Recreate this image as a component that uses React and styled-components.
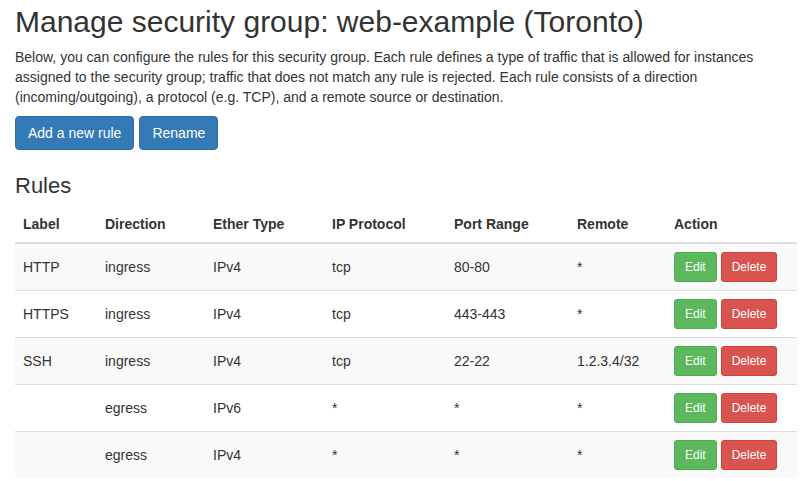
import styled, { createGlobalStyle } from "styled-components";

const GlobalStyle = createGlobalStyle`
  *, *::before, *::after {
    box-sizing: border-box;
  }
  body {
    margin: 0;
    font-family: "Liberation Sans", Arial, Helvetica, sans-serif;
    font-size: 14px;
    line-height: 1.42857;
    color: #333;
    background: #fff;
  }
`

const Page = styled.div`
  padding: 0 4px 0 15px;
`

const Title = styled.h1`
  font-size: 30px;
  font-weight: 400;
  line-height: 1.1;
  margin: 5px 0 10px;
`

const Intro = styled.p`
  margin: 0 0 8px;
`

const Toolbar = styled.div`
  display: flex;
  gap: 5px;
`

const colors = {
  primary: { bg: "#337ab7", border: "#2e6da4" },
  success: { bg: "#5cb85c", border: "#4cae4c" },
  danger: { bg: "#d9534f", border: "#d43f3a" },
}

const Button = styled.button`
  display: inline-block;
  font-family: inherit;
  font-size: ${(p) => (p.$small ? "12px" : "14px")};
  line-height: ${(p) => (p.$small ? "18px" : "20px")};
  padding: ${(p) => (p.$small ? "5px 10px" : "6px 12px")};
  border-radius: ${(p) => (p.$small ? "3px" : "4px")};
  border: 1px solid ${(p) => colors[p.$variant].border};
  background-color: ${(p) => colors[p.$variant].bg};
  color: #fff;
  cursor: pointer;
  white-space: nowrap;
`

const SectionTitle = styled.h2`
  font-size: 22px;
  font-weight: 400;
  line-height: 1.1;
  margin: 24px 0 8px;
`

const Table = styled.table`
  width: 100%;
  table-layout: fixed;
  border-collapse: collapse;
  border-spacing: 0;
`

const Th = styled.th`
  width: ${(p) => p.$w}px;
  text-align: left;
  vertical-align: bottom;
  padding: 8px;
  line-height: 20px;
  font-weight: 700;
  border-bottom: 2px solid #ddd;
`

const Row = styled.tr`
  &:nth-child(odd) {
    background-color: #f9f9f9;
  }
`

const Td = styled.td`
  padding: 8px;
  line-height: 20px;
  vertical-align: middle;
  border-top: 1px solid #ddd;
`

const Actions = styled.div`
  display: flex;
  gap: 4px;
`

const columns = [
  ["Label", 82],
  ["Direction", 108],
  ["Ether Type", 119],
  ["IP Protocol", 122],
  ["Port Range", 123],
  ["Remote", 97],
  ["Action", 131],
]

const rules = [
  ["HTTP", "ingress", "IPv4", "tcp", "80-80", "*"],
  ["HTTPS", "ingress", "IPv4", "tcp", "443-443", "*"],
  ["SSH", "ingress", "IPv4", "tcp", "22-22", "1.2.3.4/32"],
  ["", "egress", "IPv6", "*", "*", "*"],
  ["", "egress", "IPv4", "*", "*", "*"],
]

const App = () => {
  return (
    <Page>
      <GlobalStyle />
      <Title>Manage security group: web-example (Toronto)</Title>
      <Intro>
        Below, you can configure the rules for this security group. Each rule defines a type of traffic
        that is allowed for instances assigned to the security group; traffic that does not match any
        rule is rejected. Each rule consists of a direction (incoming/outgoing), a protocol (e.g. TCP),
        and a remote source or destination.
      </Intro>
      <Toolbar>
        <Button $variant="primary">Add a new rule</Button>
        <Button $variant="primary">Rename</Button>
      </Toolbar>
      <SectionTitle>Rules</SectionTitle>
      <Table>
        <thead>
          <tr>
            {columns.map(([name, w]) => (
              <Th key={name} $w={w}>{name}</Th>
            ))}
          </tr>
        </thead>
        <tbody>
          {rules.map((rule, i) => (
            <Row key={i}>
              {rule.map((cell, j) => (
                <Td key={j}>{cell}</Td>
              ))}
              <Td>
                <Actions>
                  <Button $small $variant="success">Edit</Button>
                  <Button $small $variant="danger">Delete</Button>
                </Actions>
              </Td>
            </Row>
          ))}
        </tbody>
      </Table>
    </Page>
  )
}

export default App;
